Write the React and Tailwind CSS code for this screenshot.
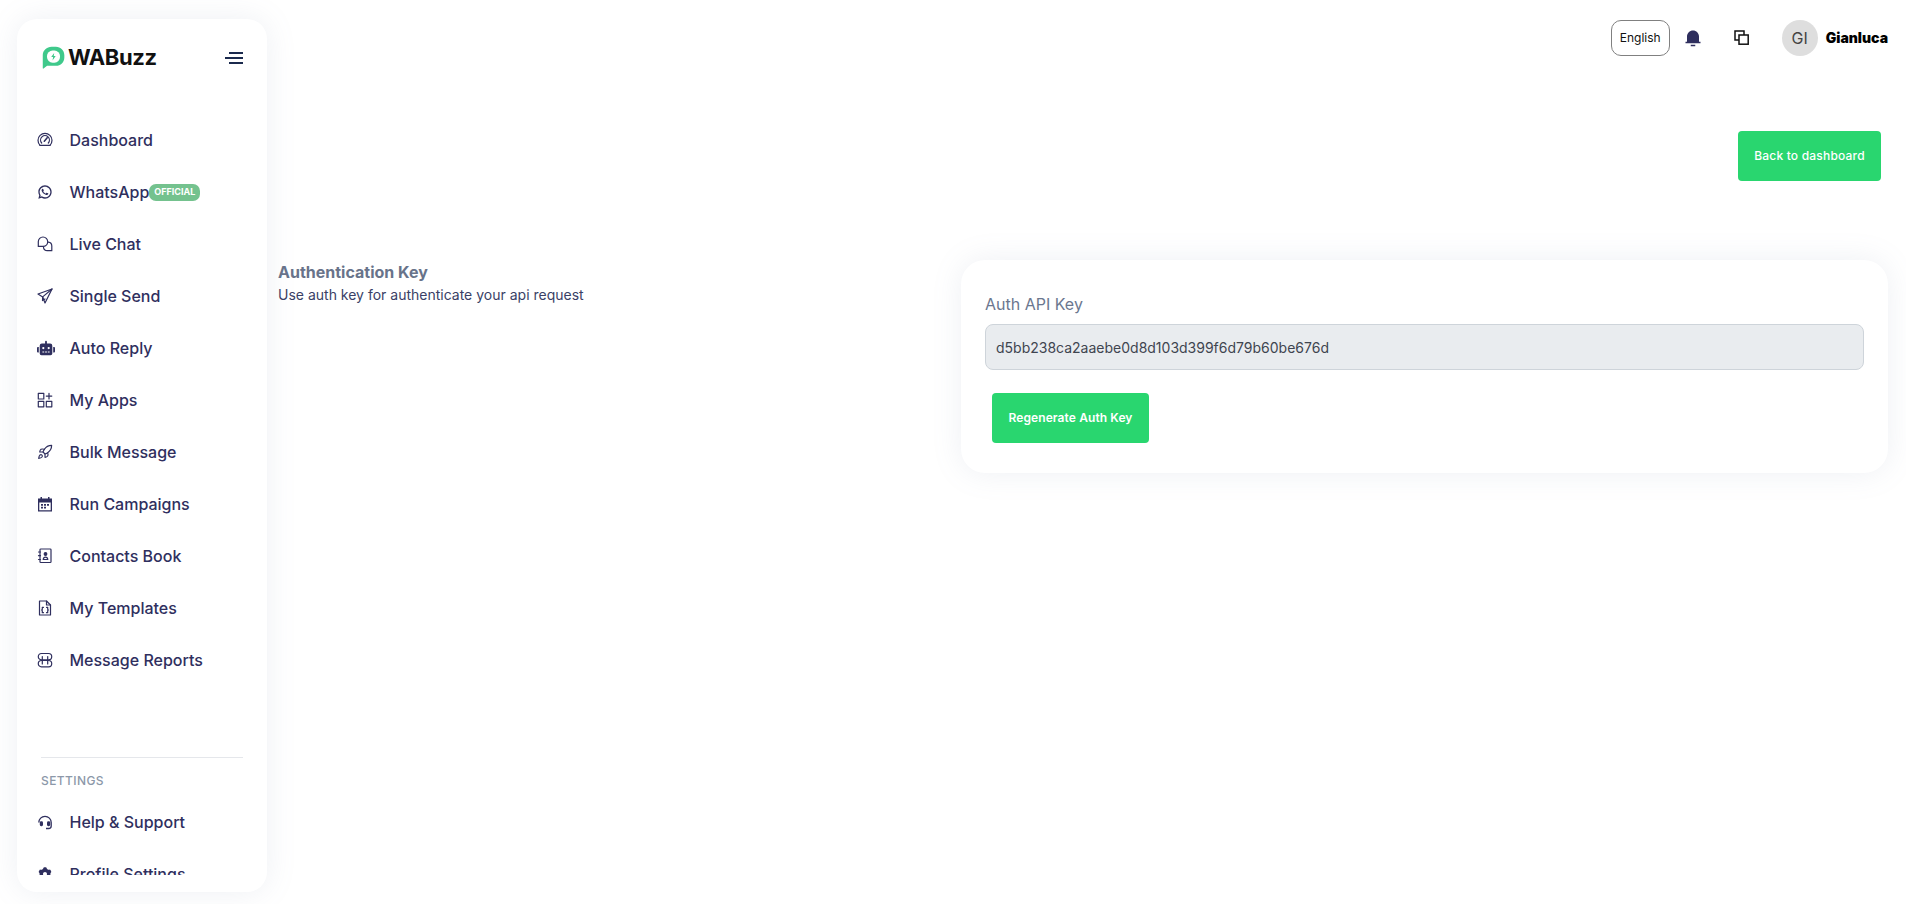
import React from "react";
import { RiWhatsappLine, RiSettings3Fill, RiNotification3Fill } from "react-icons/ri";
import { FaRobot } from "react-icons/fa";
import { Rocket } from "lucide-react";

const S = { fill: "none", stroke: "currentColor", strokeWidth: 1.2, strokeLinecap: "round", strokeLinejoin: "round" };

function DashIcon({ className }) {
  return (
    <svg viewBox="0 0 16 16" {...S} className={className}>
      <path d="M3 13.300A7 7 0 1 1 13 13.300" />
      <path d="M3 13.300h10" />
      <path d="M4.700 11A4.400 4.400 0 1 1 11.300 11" />
      <path d="M7.300 9.300 10.200 5.700" strokeWidth="1.500" />
    </svg>
  );
}
function LiveChatIcon({ className }) {
  return (
    <svg viewBox="0 0 16 16" {...S} className={className}>
      <path d="M6 1a4.700 4.700 0 0 1 4.700 4.700A4.700 4.700 0 0 1 6 10.400H1.300V5.700A4.700 4.700 0 0 1 6 1z" />
      <path d="M11.300 6.200a3.900 3.900 0 0 1 3.500 3.900v4.600h-4.600a3.900 3.900 0 0 1-3.700-3.400" />
    </svg>
  );
}
function SendIcon({ className }) {
  return (
    <svg viewBox="0 0 16 16" {...S} className={className}>
      <path d="M15 1 1 6l4.700 2.900L8 15z" />
      <path d="M15 1 5.700 8.900 5.500 12.600 8 11" />
    </svg>
  );
}
function RocketIcon({ className }) {
  return <Rocket strokeWidth={1.7} className={className} />;
}
function AppsIcon({ className }) {
  return (
    <svg viewBox="0 0 16 16" {...S} className={className}>
      <rect x="1.300" y="1.300" width="5.500" height="5.700" />
      <rect x="1.300" y="9.300" width="5.500" height="5.500" />
      <rect x="9.300" y="9.300" width="5.500" height="5.500" />
      <path d="M12 1.300v5.700M9.300 4.100h5.500" />
    </svg>
  );
}
function CalendarIcon({ className }) {
  return (
    <svg viewBox="0 0 16 16" className={className}>
      <path fill="currentColor" d="M1 2.500h2.500V1h1.500v1.500h6V1h1.500v1.500H15v13H1zM2.300 6.500v7.700h11.400V6.500z" />
      <path fill="currentColor" d="M4 8h2v1.700H4zM7 8h2v1.700H7zM10 8h2v1.700h-2zM4 10.800h2v1.700H4zM7 10.800h2v1.700H7z" />
    </svg>
  );
}
function ContactsIcon({ className }) {
  return (
    <svg viewBox="0 0 16 16" {...S} className={className}>
      <rect x="3" y="1" width="11" height="13.500" rx="0.800" />
      <path d="M1.500 4h2M1.500 7.700h2M1.500 11.500h2" />
      <circle cx="8.500" cy="6" r="1.300" fill="currentColor" />
      <path d="M6.200 11.500c.3-3.300 4.300-3.300 4.600 0z" />
    </svg>
  );
}
function TemplateIcon({ className }) {
  return (
    <svg viewBox="0 0 16 16" {...S} className={className}>
      <path d="M2.500 1h7l4 4v10h-11z" />
      <path d="M9.500 1v4h4" />
      <path d="M6.500 7.300H5.300v2L4.700 10l.6.7v2h1.200M9.500 7.300h1.200v2l.6.7-.6.7v2H9.500" />
    </svg>
  );
}
function ReportsIcon({ className }) {
  return (
    <svg viewBox="0 0 16 16" {...S} className={className}>
      <rect x="1.300" y="1.500" width="13.400" height="6.300" rx="3.100" />
      <rect x="1.300" y="8.500" width="13.400" height="6.300" rx="3.100" />
      <path d="M5.300 4.500v7.500M10.700 4.500v7.500" />
    </svg>
  );
}
function HeadsetIcon({ className }) {
  return (
    <svg viewBox="0 0 16 16" className={className}>
      <path d="M1.800 8.500a6.200 6.200 0 0 1 12.400 0V12a2.500 2.500 0 0 1-2.500 2.500H9" fill="none" stroke="currentColor" strokeWidth="1.300" />
      <rect x="2.800" y="7.200" width="3.200" height="5" rx="1.400" fill="currentColor" />
      <rect x="10" y="7.200" width="3.200" height="5" rx="1.400" fill="currentColor" />
    </svg>
  );
}
function OverlapIcon({ className }) {
  return (
    <svg viewBox="0 0 15 15" fill="none" stroke="currentColor" strokeWidth="1.500" className={className}>
      <path d="M10 5V1H1v9h4" />
      <rect x="5" y="5" width="9.200" height="9.200" />
    </svg>
  );
}

function Logo() {
  return (
    <svg viewBox="0 0 24 24" className="h-[23px] w-[23px] shrink-0">
      <path d="M10 .8h4.500C19.500.8 23.300 4.600 23.300 9.500v2.500c0 4.900-3.800 8.700-8.800 8.700H5.300L1.600 23.600c-.4.300-.8 0-.8-.4V9.500C.8 4.600 5 .8 10 .8z" fill="#3fc98b" />
      <rect x="5.200" y="4.800" width="13.600" height="12.600" rx="5.800" fill="#ffffff" />
      <path d="M12.700 7.200 9.600 11.500h2l-.6 3.500 3.300-4.600h-2z" fill="#3fc98b" />
    </svg>
  );
}

const mainItems = [
  ["Dashboard", DashIcon],
  ["WhatsApp", RiWhatsappLine, true],
  ["Live Chat", LiveChatIcon],
  ["Single Send", SendIcon],
  ["Auto Reply", FaRobot],
  ["My Apps", AppsIcon],
  ["Bulk Message", RocketIcon],
  ["Run Campaigns", CalendarIcon],
  ["Contacts Book", ContactsIcon],
  ["My Templates", TemplateIcon],
  ["Message Reports", ReportsIcon],
];

function NavItem({ label, Icon, badge }) {
  return (
    <a className="flex h-[52px] items-center pl-[20px] text-[16px] font-medium text-[#2f2f5e]">
      <span className="flex h-[16px] w-[16px] shrink-0 items-center justify-start">
        <Icon className={Icon === FaRobot ? "h-[18px] w-[18px] shrink-0" : "h-[16px] w-[16px] shrink-0"} />
      </span>
      <span className="ml-[16.5px]">{label}</span>
      {badge && (
        <span className="flex h-[17px] w-[51px] items-center justify-center rounded-[7px] bg-[#74c28e] text-[9px] font-bold text-white">
          OFFICIAL
        </span>
      )}
    </a>
  );
}

export default function App() {
  return (
    <div className="flex h-[904px] w-full overflow-hidden bg-white font-['Inter',sans-serif]">
      <aside className="my-[19px] ml-[17px] flex h-[873px] w-[250px] shrink-0 flex-col rounded-[20px] bg-white shadow-[0_0_30px_rgba(120,140,170,0.13)]">
        <div className="flex h-[76px] shrink-0 items-center justify-between pl-[25px] pr-[24px] pt-[1px]">
          <div className="flex items-center gap-[3px]">
            <Logo />
            <span className="text-[22px] font-bold tracking-[-0.4px] text-[#111111]">WABuzz</span>
          </div>
          <svg viewBox="0 0 18 12" className="h-[12px] w-[18px] text-[#1b2a4e]" stroke="currentColor" strokeWidth="2">
            <path d="M4 1h14M0 6h18M4 11h14" />
          </svg>
        </div>
        <div className="mb-[17px] min-h-0 flex-1 overflow-hidden pt-[19px]">
          {mainItems.map(([label, Icon, badge]) => (
            <NavItem key={label} label={label} Icon={Icon} badge={badge} />
          ))}
          <div className="mx-[24px] mt-[71px] border-t border-[#e5e7eb]" />
          <div className="ml-[24px] mt-[15px] text-[12px] font-medium leading-[16px] tracking-[0.4px] text-[#8c98a9]">SETTINGS</div>
          <div className="mt-[7px]">
            <NavItem label="Help & Support" Icon={HeadsetIcon} />
            <NavItem label="Profile Settings" Icon={RiSettings3Fill} />
          </div>
        </div>
      </aside>

      <main className="min-w-0 flex-1 pl-[11px] pr-[18px]">
        <header className="flex h-[56px] items-end justify-end">
          <button className="flex h-[36px] w-[59px] items-center justify-center rounded-[10px] border border-[#808080] text-[12px] text-[#111111]">
            English
          </button>
          <RiNotification3Fill className="mb-[9px] ml-[14px] h-[18px] w-[18px] text-[#2f2f5e]" />
          <OverlapIcon className="mb-[11px] ml-[32px] h-[15px] w-[15px] text-[#111111]" />
          <div className="ml-[33px] flex h-[36px] w-[36px] items-center justify-center rounded-full bg-[#dedede] text-[16px] text-[#444444]">
            GI
          </div>
          <span className="mb-[9px] ml-[8px] text-[14px] font-black leading-[18px] text-[#000000]">Gianluca</span>
        </header>

        <div className="mr-[7px] mt-[75px] flex justify-end">
          <button className="h-[50px] w-[143px] rounded-[4px] bg-[#29d66f] text-[12px] font-medium tracking-[0.2px] text-white">
            Back to dashboard
          </button>
        </div>

        <section className="mt-[79px] flex items-start justify-between">
          <div>
            <h2 className="text-[16px] font-bold leading-[24px] text-[#68738a]">Authentication Key</h2>
            <p className="mt-px text-[14px] leading-[20px] text-[#3a3f66]">Use auth key for authenticate your api request</p>
          </div>
          <div className="h-[213px] w-[927px] rounded-[24px] bg-white px-[24px] pt-[34px] shadow-[0_0_30px_rgba(120,140,170,0.13)]">
            <label className="block text-[16px] leading-[20px] text-[#6b778f]">Auth API Key</label>
            <input
              readOnly
              value="d5bb238ca2aaebe0d8d103d399f6d79b60be676d"
              className="mt-[10px] block h-[46px] w-full rounded-[8px] border border-[#ced4da] bg-[#e9ecef] px-[10px] text-[14px] text-[#3f4550] outline-none"
            />
            <button className="ml-[7px] mt-[23px] h-[50px] w-[157px] rounded-[4px] bg-[#29d66f] text-[12px] font-semibold tracking-[0.1px] text-white">
              Regenerate Auth Key
            </button>
          </div>
        </section>
      </main>
    </div>
  );
}
